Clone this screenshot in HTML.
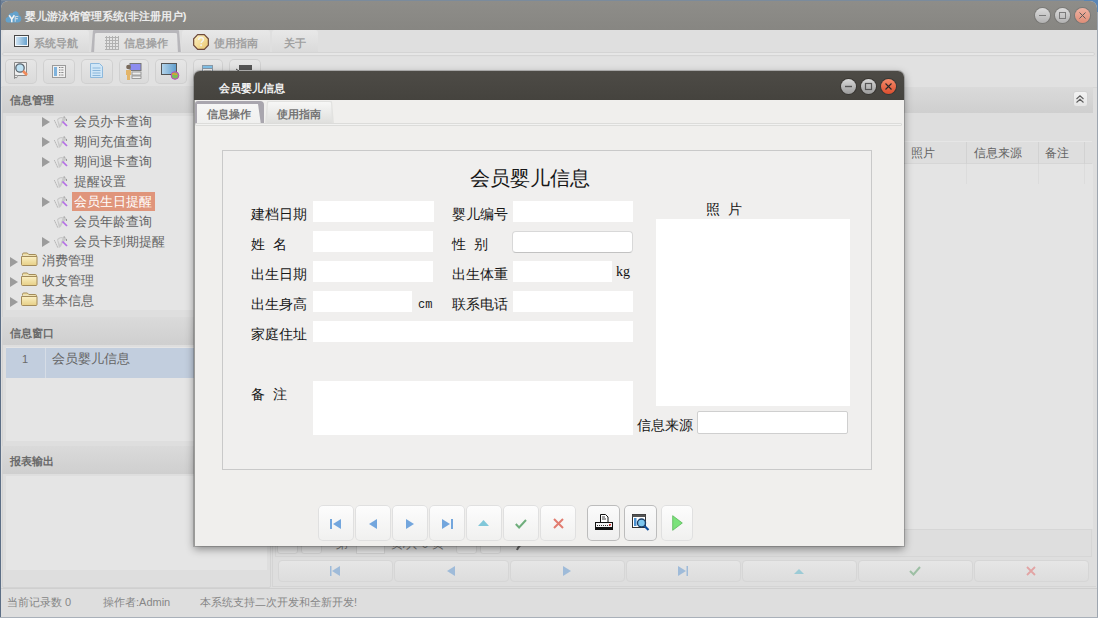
<!DOCTYPE html>
<html><head><meta charset="utf-8">
<style>
*{box-sizing:border-box;margin:0;padding:0}
html,body{width:1098px;height:618px;overflow:hidden;background:#6c7f96;font-family:"Liberation Sans",sans-serif;}
.a{position:absolute}
#win{position:absolute;left:1px;top:1px;width:1096px;height:616px;background:#dedede;border-radius:7px 7px 0 0;overflow:hidden}
#tb{left:0;top:0;width:1096px;height:29px;background:linear-gradient(#8e8d89,#878682);}
#tb .t{left:24px;top:8px;font-size:11px;font-weight:bold;color:#ececec;white-space:nowrap}
.wb{width:15px;height:15px;border-radius:50%;background:linear-gradient(#dcdcdc,#b2b2b2);box-shadow:0 0 0 1px rgba(90,90,90,.35)}
.wbc{background:linear-gradient(#f0b2a2,#df8e78)}
.tab{height:24px;border-radius:3px 3px 0 0;background:linear-gradient(#e8e8e8,#d9d9d9);font-size:11px;font-weight:bold;color:#a0a0a0;white-space:nowrap}
.tbtn{top:58px;height:25px;border-radius:5px;background:linear-gradient(#e6e6e6,#dadada);box-shadow:inset 0 0 0 1px #d0d0d0}
.ph{height:26px;background:linear-gradient(#dadada,#cfcfcf);font-size:11px;font-weight:bold;color:#6a6a6a}
.ph span{position:absolute;left:8px;top:6px}
.tr{font-size:13px;color:#646464;white-space:nowrap}
.tri{width:0;height:0;border-top:5px solid transparent;border-bottom:5px solid transparent;border-left:8px solid #9c9c9c}
.lbl{font-size:14px;color:#161616;white-space:nowrap}
.fld{height:21px;background:#fff}
.mono{font-family:"Liberation Mono",monospace;font-size:11px;color:#222}
.btn{top:434px;width:36px;height:36px;border-radius:5px;background:linear-gradient(#fdfdfd,#f0f0ef);box-shadow:inset 0 0 0 1px #e0e0e0}
.btn2{box-shadow:inset 0 0 0 1px #bcbcbc;background:linear-gradient(#fbfbfb,#eeeeee)}
.nb{top:559px;width:115px;height:22px;border-radius:4px;border:1px solid #d6d6d6;background:linear-gradient(#e6e6e6,#dddddd)}
.dwb{width:15px;height:15px;border-radius:50%;background:linear-gradient(#d8d8d8,#9c9c9c);box-shadow:0 0 0 1px #3a3834}
.dwbc{background:linear-gradient(#f58a6a,#dc4e2e)}
.pb{top:532px;width:21px;height:21px;border:1px solid #d2d2d2;border-radius:3px;background:#e4e4e4}
</style></head><body>
<div class="a" style="left:0;top:0;width:1098px;height:1px;background:#7b8b9c"></div>
<div class="a" style="left:0;top:0;width:1px;height:618px;background:#5d6f86"></div>
<div class="a" style="left:1097px;top:0;width:1px;height:618px;background:#9ea6b0"></div>
<div class="a" style="left:0;top:617px;width:1098px;height:1px;background:#a9b0b9"></div>
<div class="a" style="left:1084px;top:0;width:14px;height:12px;background:#5a86b6"></div>
<div id="win">
  <div id="tb" class="a">
    <svg class="a" width="17" height="13" viewBox="0 0 19 15" style="left:4px;top:9px"><path d="M3.5 14.5C1 14.5 0 12.5 0.5 10.5 1 8.5 2.5 8 3.5 8 3.5 5 5.5 3 8.5 3.5 9.5 1.5 12.5 0.5 14.5 2.5 15.5 3.5 15.5 5 15.5 6 17.5 6.5 19 8.5 18.5 11 18 13.5 16.5 14.5 14.5 14.5z" fill="#64a2cc"/><path d="M4.5 6l3 4.5 3-4.5M7.5 10.5v3.5" stroke="#f4f4f4" stroke-width="1.8" fill="none"/><path d="M11.5 7.5h3.5M11.5 7.5v6M11.5 10h3" stroke="#c9d6e0" stroke-width="1.3" fill="none"/></svg>
    <div class="t a">婴儿游泳馆管理系统(非注册用户)</div>
    <div class="a wb" style="left:1034px;top:7px"><svg class="a" width="15" height="15" style="left:0;top:0"><path d="M4 7.5h7" stroke="#7a7a7a" stroke-width="1.1"/></svg></div>
    <div class="a wb" style="left:1054px;top:7px"><svg class="a" width="15" height="15" style="left:0;top:0"><rect x="4.5" y="4.5" width="6" height="6" fill="none" stroke="#7a7a7a" stroke-width="1"/></svg></div>
    <div class="a wb wbc" style="left:1074px;top:7px"><svg class="a" width="15" height="15" style="left:0;top:0"><path d="M4.5 4.5l6 6M10.5 4.5l-6 6" stroke="#5a5a5a" stroke-width="1"/></svg></div>
  </div>
  <!-- ribbon tabs -->
  <div class="a" style="left:0;top:29px;width:1096px;height:27px;background:#dfdfdf"></div>
  <div class="a tab" style="left:2px;top:29px;width:86px">
    <svg class="a" width="16" height="13" style="left:11px;top:5px"><rect x="0" y="0" width="15" height="12" fill="#484848"/><rect x="1" y="1" width="13" height="10" fill="#f4f8fb"/><rect x="2" y="2" width="11" height="8" fill="url(#gm)"/><defs><linearGradient id="gm"><stop offset="0" stop-color="#cfe3f2"/><stop offset="1" stop-color="#6aa4cf"/></linearGradient></defs></svg>
    <span class="a" style="left:31px;top:6px">系统导航</span></div>
  <div class="a" style="left:90px;top:29px;width:90px;height:24px;background:#b7b6ba;clip-path:polygon(0 100%,2px 0,calc(100% - 2px) 0,100% 100%);border-radius:4px 4px 0 0"></div>
  <div class="a tab" style="left:93px;top:32px;width:84px;height:21px;background:linear-gradient(#e6e6e6,#e0e0e0);clip-path:polygon(0 100%,1px 0,calc(100% - 1px) 0,100% 100%)">
    <svg class="a" width="14" height="14" style="left:11px;top:3px"><path d="M0 1.5h14M0 4.5h14M0 7.5h14M0 10.5h14M0 13.5h14M1.5 0v14M4.5 0v14M7.5 0v14M10.5 0v14M13.5 0v14" stroke="#a9a9a9" stroke-width="1" opacity=".85"/></svg>
    <span class="a" style="left:30px;top:3px">信息操作</span></div>
  <div class="a tab" style="left:181px;top:29px;width:88px">
    <svg class="a" width="16" height="16" viewBox="0 0 17 17" style="left:11px;top:4px"><path d="M5 0.7h7L16.3 5v7L12 16.3H5L0.7 12V5z" fill="url(#gq)" stroke="#6e4a3c" stroke-width="1.3"/><defs><linearGradient id="gq" x1="0" y1="0" x2="1" y2="1"><stop offset="0" stop-color="#fff3c4"/><stop offset="1" stop-color="#e9c66f"/></linearGradient></defs><path d="M6 6.5c0-2 1-2.7 2.5-2.7S11 4.6 11 6c0 1.6-2.3 1.8-2.3 3.6" fill="none" stroke="#f4f4f0" stroke-width="1.6"/><circle cx="8.6" cy="12" r="1" fill="#f4f4f0"/></svg>
    <span class="a" style="left:32px;top:6px">使用指南</span></div>
  <div class="a tab" style="left:271px;top:29px;width:46px"><span class="a" style="left:12px;top:6px">关于</span></div>
  <div class="a" style="left:1px;top:51px;width:1093px;height:4px;border:1px solid #d4d4d4;border-radius:2px;background:#e6e6e6"></div>
  <!-- toolbar -->
  <div class="a" style="left:0;top:56px;width:1096px;height:30px;background:#e1e1e1"></div>
  <div class="a tbtn" style="left:4px;width:32px"><svg class="a" width="18" height="18" viewBox="0 0 18 18" style="left:8px;top:3px"><path d="M1.5 0.5h12v13h-9l-3 3z" fill="#efefef" stroke="#8a8a8a"/><circle cx="3" cy="14.5" r="1.3" fill="#fff" stroke="#777" stroke-width=".8"/><circle cx="7" cy="6" r="4.2" fill="#bfe2f4" stroke="#5b6670" stroke-width="1.3"/><path d="M10 9l4 4" stroke="#f08a5a" stroke-width="2.6"/></svg></div>
  <div class="a tbtn" style="left:42px;width:32px"><svg class="a" width="14" height="13" viewBox="0 0 14 13" style="left:9px;top:6px"><rect x="0.5" y="0.5" width="13" height="12" fill="#f0f0f0" stroke="#9a9a9a"/><rect x="2" y="2" width="3" height="9" fill="#7fb3dd"/><path d="M7 2.5h5M7 5h5M7 7.5h5M7 10h5" stroke="#777" stroke-width="1" stroke-dasharray="1 .6"/></svg></div>
  <div class="a tbtn" style="left:80px;width:32px"><svg class="a" width="13" height="15" viewBox="0 0 13 15" style="left:9px;top:4px"><path d="M0.5 0.5h9l3 3v11h-12z" fill="#cfe6f7" stroke="#8db8dc"/><path d="M2.5 5h8M2.5 7.5h8M2.5 10h8M2.5 12.5h8" stroke="#8ab6da" stroke-width="1"/></svg></div>
  <div class="a tbtn" style="left:118px;width:30px"><svg class="a" width="17" height="17" viewBox="0 0 17 17" style="left:6px;top:4px"><rect x="5" y="0.5" width="11" height="7" fill="#8c8cf0" stroke="#777"/><rect x="7" y="9" width="9" height="3" fill="#eee" stroke="#888" stroke-width=".8"/><rect x="7" y="13" width="9" height="2.5" fill="#eee" stroke="#888" stroke-width=".8"/><circle cx="3.5" cy="4" r="2.3" fill="#7a6a5a"/><path d="M1 7h5v5H5v5H2v-5H1z" fill="#e3b56a"/></svg></div>
  <div class="a tbtn" style="left:154px;width:32px"><svg class="a" width="19" height="17" viewBox="0 0 19 17" style="left:6px;top:4px"><rect x="0.5" y="0.5" width="15" height="11" fill="url(#gs)" stroke="#555"/><defs><linearGradient id="gs"><stop offset="0" stop-color="#b6d6ec"/><stop offset="1" stop-color="#5e9ccb"/></linearGradient></defs><circle cx="14" cy="12.5" r="3.8" fill="#7dbd5a" stroke="#c040c0" stroke-width="1"/><path d="M11 11c2-1 3 1 5 0" stroke="#e0a030" stroke-width="1.5" fill="none"/></svg></div>
  <div class="a tbtn" style="left:192px;width:30px"><svg class="a" width="14" height="14" style="left:9px;top:6px"><rect x="0.5" y="0.5" width="10" height="3" fill="#7fc0e8" stroke="#8a9aa8"/><rect x="0.5" y="3.5" width="10" height="9" fill="#f0f0f0" stroke="#8a9aa8"/><path d="M2 6h7M2 8.5h7" stroke="#aaa"/><circle cx="11" cy="11" r="2" fill="#4caf50"/></svg></div>
  <div class="a tbtn" style="left:228px;width:32px"><svg class="a" width="18" height="14" style="left:6px;top:5px"><path d="M4 1h13v5H4zM2 8h13v5H2z" fill="#555"/><path d="M1 5l3 2" stroke="#444"/></svg></div>
  <div class="a" style="left:0;top:86px;width:1096px;height:1px;background:#d6d6d6"></div>

  <!-- left panel -->
  <div class="a" style="left:1px;top:86px;width:269px;height:501px;border:1px solid #d3d3d3;border-radius:2px"></div>
  <div class="a ph" style="left:1px;top:85px;width:194px;height:27px"><span style="top:7px">信息管理</span></div>
  <div class="a" style="left:5px;top:115px;width:190px;height:194px;background:#e5e5e5"></div>
  <div class="a tri" style="left:41px;top:116px"></div>
  <svg class="a" width="14" height="13" viewBox="0 0 14 13" style="left:53px;top:115px"><path d="M3 3.5C4.5 1.5 7 0.5 9 1.5 10.5 0.5 12 1 12.5 3 11.5 5 10 6 9 6.5L7 10.5 5 12z" fill="#c9c9c9"/><path d="M4 4C5.5 2.5 7 2 8.5 2.5L6 9z" fill="#e2e2e2"/><path d="M0.5 4.5L4 12" stroke="#8e8e8e" stroke-width="1" stroke-dasharray="1 1.2"/><path d="M9.5 1h1.5M12.5 3v2" stroke="#999"/><path d="M8.5 5.5l4.5 4.5" stroke="#b56ee6" stroke-width="1.7"/></svg>
  <div class="a tr" style="left:73px;top:112px">会员办卡查询</div>
  <div class="a tri" style="left:41px;top:136px"></div>
  <svg class="a" width="14" height="13" viewBox="0 0 14 13" style="left:53px;top:135px"><path d="M3 3.5C4.5 1.5 7 0.5 9 1.5 10.5 0.5 12 1 12.5 3 11.5 5 10 6 9 6.5L7 10.5 5 12z" fill="#c9c9c9"/><path d="M4 4C5.5 2.5 7 2 8.5 2.5L6 9z" fill="#e2e2e2"/><path d="M0.5 4.5L4 12" stroke="#8e8e8e" stroke-width="1" stroke-dasharray="1 1.2"/><path d="M9.5 1h1.5M12.5 3v2" stroke="#999"/><path d="M8.5 5.5l4.5 4.5" stroke="#b56ee6" stroke-width="1.7"/></svg>
  <div class="a tr" style="left:73px;top:132px">期间充值查询</div>
  <div class="a tri" style="left:41px;top:156px"></div>
  <svg class="a" width="14" height="13" viewBox="0 0 14 13" style="left:53px;top:155px"><path d="M3 3.5C4.5 1.5 7 0.5 9 1.5 10.5 0.5 12 1 12.5 3 11.5 5 10 6 9 6.5L7 10.5 5 12z" fill="#c9c9c9"/><path d="M4 4C5.5 2.5 7 2 8.5 2.5L6 9z" fill="#e2e2e2"/><path d="M0.5 4.5L4 12" stroke="#8e8e8e" stroke-width="1" stroke-dasharray="1 1.2"/><path d="M9.5 1h1.5M12.5 3v2" stroke="#999"/><path d="M8.5 5.5l4.5 4.5" stroke="#b56ee6" stroke-width="1.7"/></svg>
  <div class="a tr" style="left:73px;top:152px">期间退卡查询</div>
  <svg class="a" width="14" height="13" viewBox="0 0 14 13" style="left:53px;top:175px"><path d="M3 3.5C4.5 1.5 7 0.5 9 1.5 10.5 0.5 12 1 12.5 3 11.5 5 10 6 9 6.5L7 10.5 5 12z" fill="#c9c9c9"/><path d="M4 4C5.5 2.5 7 2 8.5 2.5L6 9z" fill="#e2e2e2"/><path d="M0.5 4.5L4 12" stroke="#8e8e8e" stroke-width="1" stroke-dasharray="1 1.2"/><path d="M9.5 1h1.5M12.5 3v2" stroke="#999"/><path d="M8.5 5.5l4.5 4.5" stroke="#b56ee6" stroke-width="1.7"/></svg>
  <div class="a tr" style="left:73px;top:172px">提醒设置</div>
  <div class="a tri" style="left:41px;top:196px"></div>
  <svg class="a" width="14" height="13" viewBox="0 0 14 13" style="left:53px;top:195px"><path d="M3 3.5C4.5 1.5 7 0.5 9 1.5 10.5 0.5 12 1 12.5 3 11.5 5 10 6 9 6.5L7 10.5 5 12z" fill="#c9c9c9"/><path d="M4 4C5.5 2.5 7 2 8.5 2.5L6 9z" fill="#e2e2e2"/><path d="M0.5 4.5L4 12" stroke="#8e8e8e" stroke-width="1" stroke-dasharray="1 1.2"/><path d="M9.5 1h1.5M12.5 3v2" stroke="#999"/><path d="M8.5 5.5l4.5 4.5" stroke="#b56ee6" stroke-width="1.7"/></svg>
  <div class="a" style="left:71px;top:191px;width:83px;height:19px;background:#e0957b"></div>
  <div class="a tr" style="left:73px;top:192px;color:#fff">会员生日提醒</div>
  <svg class="a" width="14" height="13" viewBox="0 0 14 13" style="left:53px;top:215px"><path d="M3 3.5C4.5 1.5 7 0.5 9 1.5 10.5 0.5 12 1 12.5 3 11.5 5 10 6 9 6.5L7 10.5 5 12z" fill="#c9c9c9"/><path d="M4 4C5.5 2.5 7 2 8.5 2.5L6 9z" fill="#e2e2e2"/><path d="M0.5 4.5L4 12" stroke="#8e8e8e" stroke-width="1" stroke-dasharray="1 1.2"/><path d="M9.5 1h1.5M12.5 3v2" stroke="#999"/><path d="M8.5 5.5l4.5 4.5" stroke="#b56ee6" stroke-width="1.7"/></svg>
  <div class="a tr" style="left:73px;top:212px">会员年龄查询</div>
  <div class="a tri" style="left:41px;top:236px"></div>
  <svg class="a" width="14" height="13" viewBox="0 0 14 13" style="left:53px;top:235px"><path d="M3 3.5C4.5 1.5 7 0.5 9 1.5 10.5 0.5 12 1 12.5 3 11.5 5 10 6 9 6.5L7 10.5 5 12z" fill="#c9c9c9"/><path d="M4 4C5.5 2.5 7 2 8.5 2.5L6 9z" fill="#e2e2e2"/><path d="M0.5 4.5L4 12" stroke="#8e8e8e" stroke-width="1" stroke-dasharray="1 1.2"/><path d="M9.5 1h1.5M12.5 3v2" stroke="#999"/><path d="M8.5 5.5l4.5 4.5" stroke="#b56ee6" stroke-width="1.7"/></svg>
  <div class="a tr" style="left:73px;top:232px">会员卡到期提醒</div>
  <div class="a tri" style="left:9px;top:256px"></div>
  <svg class="a" width="17" height="14" viewBox="0 0 17 14" style="left:20px;top:251px"><defs><linearGradient id="gf" x1="0" y1="0" x2="0" y2="1"><stop offset="0" stop-color="#fbf0c4"/><stop offset="1" stop-color="#e6cf86"/></linearGradient></defs><path d="M1.5 3.5V2.2C1.5 1.5 2 1 2.7 1h3.6l1.5 1.5h6.5c.7 0 1.2.5 1.2 1.2v0.3" fill="#efe0a8" stroke="#a38b5a"/><path d="M0.5 4.5h15.5v8c0 .6-.4 1-1 1H1.5c-.6 0-1-.4-1-1z" fill="url(#gf)" stroke="#a38b5a"/></svg>
  <div class="a tr" style="left:41px;top:251px">消费管理</div>
  <div class="a tri" style="left:9px;top:276px"></div>
  <svg class="a" width="17" height="14" viewBox="0 0 17 14" style="left:20px;top:271px"><defs><linearGradient id="gf" x1="0" y1="0" x2="0" y2="1"><stop offset="0" stop-color="#fbf0c4"/><stop offset="1" stop-color="#e6cf86"/></linearGradient></defs><path d="M1.5 3.5V2.2C1.5 1.5 2 1 2.7 1h3.6l1.5 1.5h6.5c.7 0 1.2.5 1.2 1.2v0.3" fill="#efe0a8" stroke="#a38b5a"/><path d="M0.5 4.5h15.5v8c0 .6-.4 1-1 1H1.5c-.6 0-1-.4-1-1z" fill="url(#gf)" stroke="#a38b5a"/></svg>
  <div class="a tr" style="left:41px;top:271px">收支管理</div>
  <div class="a tri" style="left:9px;top:296px"></div>
  <svg class="a" width="17" height="14" viewBox="0 0 17 14" style="left:20px;top:291px"><defs><linearGradient id="gf" x1="0" y1="0" x2="0" y2="1"><stop offset="0" stop-color="#fbf0c4"/><stop offset="1" stop-color="#e6cf86"/></linearGradient></defs><path d="M1.5 3.5V2.2C1.5 1.5 2 1 2.7 1h3.6l1.5 1.5h6.5c.7 0 1.2.5 1.2 1.2v0.3" fill="#efe0a8" stroke="#a38b5a"/><path d="M0.5 4.5h15.5v8c0 .6-.4 1-1 1H1.5c-.6 0-1-.4-1-1z" fill="url(#gf)" stroke="#a38b5a"/></svg>
  <div class="a tr" style="left:41px;top:291px">基本信息</div>

  <div class="a ph" style="left:1px;top:316px;width:194px;height:28px"><span style="top:9px">信息窗口</span></div>
  <div class="a" style="left:5px;top:346px;width:190px;height:94px;background:#e5e5e5"></div>
  <div class="a" style="left:5px;top:347px;width:190px;height:30px;background:#c2cede"></div>
  <div class="a" style="left:44px;top:347px;width:1px;height:30px;background:#d6dde6"></div>
  <div class="a tr" style="left:21px;top:352px;font-size:11px;color:#6a6a6a">1</div>
  <div class="a tr" style="left:51px;top:349px">会员婴儿信息</div>

  <div class="a ph" style="left:1px;top:445px;width:268px;height:28px"><span style="top:8px">报表输出</span></div>
  <div class="a" style="left:5px;top:475px;width:261px;height:94px;background:#e5e5e5"></div>

  <!-- right panel -->
  <div class="a" style="left:271px;top:86px;width:824px;height:500px;border:1px solid #d4d4d4;border-top:0;border-right:0"></div>
  <div class="a ph" style="left:272px;top:86px;width:820px"></div>

  <div class="a" style="left:1072px;top:90px;width:15px;height:16px;border:1px solid #d2d2d2;border-radius:3px;background:linear-gradient(#f2f2f2,#e6e6e6)"></div>
  <svg class="a" width="10" height="10" viewBox="0 0 10 10" style="left:1074px;top:93px"><path d="M1.5 5L5 1.8 8.5 5M1.5 8.5L5 5.3 8.5 8.5" fill="none" stroke="#5e5e5e" stroke-width="1.1"/></svg>
  <div class="a" style="left:273px;top:140px;width:818px;height:23px;background:#dedede;border-top:1px solid #e6e6e6;border-bottom:1px solid #d6d6d6"></div>
  <div class="a" style="left:274px;top:163px;width:818px;height:365px;background:#e4e4e4"></div>
  
  <div class="a" style="left:965px;top:141px;width:1px;height:42px;background:linear-gradient(#d2d2d2 0,#d2d2d2 22px,#dcdcdc 22px)"></div>
  <div class="a" style="left:1037px;top:141px;width:1px;height:42px;background:linear-gradient(#d2d2d2 0,#d2d2d2 22px,#dcdcdc 22px)"></div>
  <div class="a" style="left:1083px;top:141px;width:1px;height:42px;background:linear-gradient(#d2d2d2 0,#d2d2d2 22px,#dcdcdc 22px)"></div>
  <div class="a tr" style="left:910px;top:144px;font-size:12px">照片</div>
  <div class="a tr" style="left:973px;top:144px;font-size:12px">信息来源</div>
  <div class="a tr" style="left:1044px;top:144px;font-size:12px">备注</div>
  <!-- pager -->
  <div class="a" style="left:274px;top:528px;width:817px;height:28px;background:#dedede;border:1px solid #d6d6d6"></div>
  <div class="a pb" style="left:276px"></div>
  <div class="a pb" style="left:300px"></div>
  <div class="a tr" style="left:335px;top:535px;font-size:12px;color:#777">第</div>
  <div class="a" style="left:355px;top:533px;width:29px;height:20px;background:#e8e8e8;border:1px solid #d0d0d0"></div>
  <div class="a tr" style="left:390px;top:535px;font-size:12px;color:#777">页/共 0 页</div>
  <div class="a pb" style="left:455px"></div>
  <div class="a pb" style="left:479px"></div>
  <svg class="a" width="10" height="10" style="left:515px;top:540px"><path d="M1 9C3 4 6 3 9 3" stroke="#666" stroke-width="2" fill="none"/></svg>
  <div class="a nb" style="left:277px"><svg width="12" height="10" viewBox="0 0 12 10" class="a" style="left:50px;top:5px"><rect x="1" y="0" width="1.5" height="10" fill="#9fbbd9"/><path d="M11 0v10L3 5z" fill="#9fbbd9"/></svg></div>
  <div class="a nb" style="left:393px"><svg width="12" height="10" viewBox="0 0 12 10" class="a" style="left:50px;top:5px"><path d="M10 0v10L2 5z" fill="#9fbbd9"/></svg></div>
  <div class="a nb" style="left:509px"><svg width="12" height="10" viewBox="0 0 12 10" class="a" style="left:50px;top:5px"><path d="M2 0v10L10 5z" fill="#9fbbd9"/></svg></div>
  <div class="a nb" style="left:625px"><svg width="12" height="10" viewBox="0 0 12 10" class="a" style="left:50px;top:5px"><path d="M1 0v10L9 5z" fill="#9fbbd9"/><rect x="9.5" y="0" width="1.5" height="10" fill="#9fbbd9"/></svg></div>
  <div class="a nb" style="left:741px"><svg width="12" height="10" viewBox="0 0 12 10" class="a" style="left:50px;top:5px"><path d="M1 8h10L6 3z" fill="#9ccbd6"/></svg></div>
  <div class="a nb" style="left:857px"><svg width="12" height="10" viewBox="0 0 12 10" class="a" style="left:50px;top:5px"><path d="M1 5l3.5 3.5L11 1" fill="none" stroke="#9dbfa4" stroke-width="2"/></svg></div>
  <div class="a nb" style="left:973px"><svg width="12" height="10" viewBox="0 0 12 10" class="a" style="left:50px;top:5px"><path d="M2 1l8 8M10 1l-8 8" fill="none" stroke="#e2a4a4" stroke-width="1.8"/></svg></div>

  <!-- status bar -->
  <div class="a" style="left:0;top:587px;width:1096px;height:1px;background:#cfcfcf"></div>
  <div class="a" style="left:6px;top:594px;font-size:11px;color:#868686;white-space:nowrap">当前记录数 0</div>
  <div class="a" style="left:102px;top:594px;font-size:11px;color:#868686;white-space:nowrap">操作者:Admin</div>
  <div class="a" style="left:199px;top:594px;font-size:11px;color:#868686;white-space:nowrap">本系统支持二次开发和全新开发!</div>
</div>

<!-- dialog -->
<div id="dlg" class="a" style="left:194px;top:71px;width:710px;height:475px;background:#f0efed;border-radius:6px 6px 0 0;box-shadow:inset 1px 0 0 #9a9a98,0 0 0 1px rgba(60,60,60,.25),0 3px 9px rgba(0,0,0,.42)">
  <div class="a" style="left:0;top:0;width:710px;height:29px;background:linear-gradient(#4d4b46,#45433e);border-radius:6px 6px 0 0"></div>
  <div class="a" style="left:25px;top:10px;font-size:11px;font-weight:bold;color:#f2f2f2;white-space:nowrap">会员婴儿信息</div>

  <!-- dialog tabs -->
  <div class="a" style="left:1px;top:30px;width:69px;height:24px;border-radius:3px 4px 0 0;background:#a9a6ae;clip-path:polygon(0 0,100% 0,calc(100% - 0px) 0,100% 100%,0 100%)"></div>
  <div class="a" style="left:3px;top:33px;width:64px;height:21px;background:linear-gradient(#f6f6f5,#efefee);clip-path:polygon(0 0,calc(100% - 3px) 0,100% 100%,0 100%)"></div>
  <div class="a" style="left:13px;top:36px;font-size:11px;font-weight:bold;color:#747474;white-space:nowrap">信息操作</div>
  <div class="a" style="left:71px;top:30px;width:69px;height:23px;border-radius:4px 4px 0 0;background:#e2e2e0;clip-path:polygon(2px 0,calc(100% - 2px) 0,100% 100%,0 100%)"></div>
  <div class="a" style="left:73px;top:31px;width:65px;height:22px;border-radius:3px 3px 0 0;background:linear-gradient(#f7f7f6,#dededc);clip-path:polygon(1px 0,calc(100% - 1px) 0,100% 100%,0 100%)"></div>
  <div class="a" style="left:83px;top:36px;font-size:11px;font-weight:bold;color:#747474;white-space:nowrap">使用指南</div>
  <div class="a" style="left:1px;top:52px;width:707px;height:3px;border:1px solid #dcdcda;border-radius:1px;background:#f2f2f1"></div>
  <!-- group box -->
  <div class="a" style="left:28px;top:79px;width:650px;height:320px;border:1px solid #c9c9c9;background:#f0efee"></div>
  <div class="a lbl" style="left:276px;top:94px;font-size:20px">会员婴儿信息</div>

  <!-- form -->
  <div class="a lbl" style="left:57px;top:135px">建档日期</div>
  <div class="a fld" style="left:119px;top:130px;width:121px"></div>
  <div class="a lbl" style="left:57px;top:165px">姓&nbsp;&nbsp;名</div>
  <div class="a fld" style="left:119px;top:160px;width:120px"></div>
  <div class="a lbl" style="left:57px;top:195px">出生日期</div>
  <div class="a fld" style="left:119px;top:190px;width:120px"></div>
  <div class="a lbl" style="left:57px;top:225px">出生身高</div>
  <div class="a fld" style="left:119px;top:220px;width:99px"></div>
  <div class="a mono" style="left:224px;top:227px;font-size:12px">cm</div>
  <div class="a lbl" style="left:57px;top:255px">家庭住址</div>
  <div class="a fld" style="left:119px;top:250px;width:320px"></div>
  <div class="a lbl" style="left:258px;top:135px">婴儿编号</div>
  <div class="a fld" style="left:319px;top:130px;width:120px"></div>
  <div class="a lbl" style="left:258px;top:165px">性&nbsp;&nbsp;别</div>
  <div class="a fld" style="left:318px;top:160px;width:121px;height:22px;border:1px solid #d8d8d8;border-bottom-color:#c2c2c2;border-radius:4px"></div>
  <div class="a lbl" style="left:258px;top:195px">出生体重</div>
  <div class="a fld" style="left:319px;top:190px;width:99px"></div>
  <div class="a" style="left:422px;top:193px;font-family:'Liberation Serif',serif;font-size:14px;color:#111">kg</div>
  <div class="a lbl" style="left:258px;top:225px">联系电话</div>
  <div class="a fld" style="left:319px;top:220px;width:120px"></div>
  <div class="a lbl" style="left:57px;top:315px">备&nbsp;&nbsp;注</div>
  <div class="a fld" style="left:119px;top:310px;width:320px;height:54px"></div>
  <div class="a lbl" style="left:512px;top:130px">照&nbsp;&nbsp;片</div>
  <div class="a fld" style="left:462px;top:148px;width:194px;height:187px"></div>
  <div class="a lbl" style="left:443px;top:346px">信息来源</div>
  <div class="a fld" style="left:503px;top:340px;width:151px;height:23px;border:1px solid #cfcfcf;border-radius:2px"></div>
  <!-- buttons -->
  <div class="a btn" style="left:124px"><svg class="a" width="12" height="10" viewBox="0 0 12 10" style="left:12px;top:14px"><rect x="0" y="0" width="2" height="10" fill="#73a6dd"/><path d="M11 0v10L3 5z" fill="#73a6dd"/></svg></div>
  <div class="a btn" style="left:161px"><svg class="a" width="12" height="10" viewBox="0 0 12 10" style="left:13px;top:14px"><path d="M9 0v10L1 5z" fill="#73a6dd"/></svg></div>
  <div class="a btn" style="left:198px"><svg class="a" width="12" height="10" viewBox="0 0 12 10" style="left:13px;top:14px"><path d="M1 0v10L9 5z" fill="#73a6dd"/></svg></div>
  <div class="a btn" style="left:235px"><svg class="a" width="12" height="10" viewBox="0 0 12 10" style="left:13px;top:14px"><path d="M0 0v10L8 5z" fill="#73a6dd"/><rect x="9" y="0" width="2" height="10" fill="#73a6dd"/></svg></div>
  <div class="a btn" style="left:272px"><svg class="a" width="12" height="10" viewBox="0 0 12 10" style="left:12px;top:14px"><path d="M0 7h11L5.5 1z" fill="#80c7d9"/></svg></div>
  <div class="a btn" style="left:309px"><svg class="a" width="12" height="10" viewBox="0 0 12 10" style="left:12px;top:14px"><path d="M0.8 5l3.3 3.5L11 1" fill="none" stroke="#6fae7c" stroke-width="2"/></svg></div>
  <div class="a btn" style="left:346px"><svg class="a" width="12" height="11" viewBox="0 0 12 11" style="left:13px;top:13px"><path d="M1 1l9 9M10 1l-9 9" fill="none" stroke="#e17c70" stroke-width="2"/></svg></div>
  <div class="a btn btn2" style="left:393px;width:33px"><svg class="a" width="18" height="17" viewBox="0 0 18 17" style="left:8px;top:9px"><path d="M5.5 0.5h5l2.5 2.5v6h-7.5z" fill="#fff" stroke="#111"/><path d="M7 3h3M7 5h4" stroke="#111" stroke-width=".8"/><rect x="0.5" y="8.5" width="17" height="7" fill="#f4f4f4" stroke="#111"/><path d="M2 11.5h14" stroke="#333" stroke-dasharray="1 1"/><path d="M1 14h16" stroke="#111" stroke-width="2"/><rect x="14" y="10" width="2" height="1.5" fill="#d33"/></svg></div>
  <div class="a btn btn2" style="left:430px;width:33px"><svg class="a" width="18" height="17" viewBox="0 0 18 17" style="left:8px;top:9px"><rect x="0.5" y="0.5" width="13" height="13" fill="#fff" stroke="#333"/><rect x="0.5" y="0.5" width="13" height="2.5" fill="#555"/><rect x="2" y="4" width="2.5" height="8" fill="#4a90d0"/><circle cx="9.5" cy="9" r="4" fill="#7cc6ee" stroke="#1b3e66" stroke-width="1.4"/><path d="M12.5 12l4 4" stroke="#0a4a9a" stroke-width="2.2"/></svg></div>
  <div class="a btn" style="left:467px;width:32px"><svg class="a" width="11" height="16" viewBox="0 0 11 16" style="left:11px;top:10px"><path d="M0.7 0.7v14.6L10.3 8z" fill="#7be27b" stroke="#58b858" stroke-width=".8"/></svg></div>
  <!-- dialog window buttons -->
  <div class="a dwb" style="left:647px;top:8px"><svg class="a" width="15" height="15"><path d="M4 7.5h7" stroke="#555" stroke-width="1.4"/></svg></div>
  <div class="a dwb" style="left:667px;top:8px"><svg class="a" width="15" height="15"><rect x="4.5" y="4.5" width="6" height="6" fill="none" stroke="#555" stroke-width="1.2"/></svg></div>
  <div class="a dwb dwbc" style="left:687px;top:8px"><svg class="a" width="15" height="15"><path d="M4.5 4.5l6 6M10.5 4.5l-6 6" stroke="#2a2a2a" stroke-width="1.1"/></svg></div>
</div>
</body></html>
